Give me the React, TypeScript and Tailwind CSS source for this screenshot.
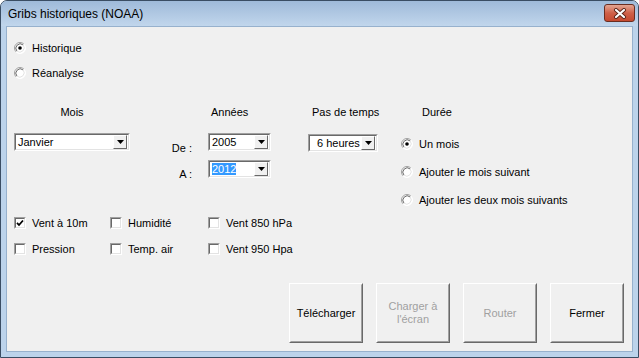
import React from "react";

// Boîte de dialogue "Gribs historiques (NOAA)" — style UserForm Windows 7

const font = "font-['Liberation_Sans',Arial,sans-serif]";

function Radio({ checked, label }: { checked?: boolean; label: string }) {
    return (
        <div className="flex h-[20px] items-center">
            <svg width="12" height="12" viewBox="0 0 12 12" className="shrink-0">
                <circle cx="6" cy="6" r="5.5" fill="#ffffff" />
                <path d="M2.1 9.9 A5.5 5.5 0 0 1 9.9 2.1" stroke="#a0a0a0" fill="none" />
                <path d="M2.9 9.1 A4.4 4.4 0 0 1 9.1 2.9" stroke="#696969" fill="none" />
                <path d="M9.9 2.1 A5.5 5.5 0 0 1 2.1 9.9" stroke="#ffffff" fill="none" />
                <path d="M9.1 2.9 A4.4 4.4 0 0 1 2.9 9.1" stroke="#e3e3e3" fill="none" />
                {checked && <circle cx="6" cy="6" r="1.8" fill="#000000" />}
            </svg>
            <span className="ml-[6px] leading-none">{label}</span>
        </div>
    );
}

function Check({ checked, label, width }: { checked?: boolean; label: string; width: string }) {
    return (
        <div className={`flex h-[20px] items-center ${width}`}>
            <span className="flex h-[12px] w-[12px] shrink-0 border border-t-[#a0a0a0] border-l-[#a0a0a0] border-r-white border-b-white">
                <span className="flex flex-1 items-center justify-center border border-t-[#696969] border-l-[#696969] border-r-[#e3e3e3] border-b-[#e3e3e3] bg-white">
                    {checked && (
                        <svg width="8" height="8" viewBox="0 0 8 8">
                            <polyline points="1,3.8 3,6 7,1.5" fill="none" stroke="#000" strokeWidth="1.8" />
                        </svg>
                    )}
                </span>
            </span>
            <span className="ml-[6px] leading-none">{label}</span>
        </div>
    );
}

function Combo({ value, width, selected, pad = "pl-[2px]" }: { value: string; width: string; selected?: boolean; pad?: string }) {
    return (
        <div className={`flex h-[18px] ${width} border border-t-[#a0a0a0] border-l-[#a0a0a0] border-r-white border-b-white`}>
            <div className="flex flex-1 items-center border border-t-[#696969] border-l-[#696969] border-r-[#e3e3e3] border-b-[#e3e3e3] bg-white">
                <div className={`flex-1 ${pad}`}>
                    <span className={selected ? "bg-[#3399ff] text-white" : ""}>{value}</span>
                </div>
                <div className="mr-[1px] flex h-[14px] w-[14px] items-center justify-center border border-t-white border-l-white border-r-[#696969] border-b-[#696969] bg-[#f0f0f0]">
                    <svg width="7" height="4" viewBox="0 0 7 4">
                        <polygon points="0,0 7,0 3.5,4" fill="#000" />
                    </svg>
                </div>
            </div>
        </div>
    );
}

function Btn({ label, disabled }: { label: React.ReactNode; disabled?: boolean }) {
    return (
        <div className="flex h-[60px] w-[74px] border border-t-white border-l-white border-r-[#696969] border-b-[#696969]">
            <div
                className={`flex flex-1 items-center justify-center border border-t-[#f0f0f0] border-l-[#f0f0f0] border-r-[#a0a0a0] border-b-[#a0a0a0] text-center leading-[13px] ${
                    disabled ? "text-[#a0a0a0]" : "text-black"
                }`}
            >
                {label}
            </div>
        </div>
    );
}

export default function App() {
    return (
        <div className={`h-[358px] w-[639px] bg-white ${font} text-[11px] text-black`}>
            <div className="flex h-full w-full flex-col rounded-t-[7px] border border-[#3a4d63] bg-[#bcd3eb]">
                {/* barre de titre */}
                <div className="flex h-[25px] items-start justify-between rounded-t-[6px] bg-gradient-to-b from-[#9fbad9] to-[#c1d6ec] pl-[7px] pr-[3px]">
                    <span className="mt-[5px] text-[12px] leading-[16px]">Gribs historiques (NOAA)</span>
                    <div className="mt-[3px] flex h-[18px] w-[31px] items-center justify-center rounded-[3px] border border-[#6a2d20] bg-gradient-to-b from-[#e3a592] via-[#cf6048] to-[#c5492f]">
                        <svg width="14" height="11" viewBox="0 0 14 11">
                            <path d="M3 2 L11 9 M11 2 L3 9" stroke="#5a2418" strokeWidth="4" strokeLinecap="round" />
                            <path d="M3 2 L11 9 M11 2 L3 9" stroke="#ffffff" strokeWidth="2.2" strokeLinecap="round" />
                        </svg>
                    </div>
                </div>

                {/* zone cliente */}
                <div className="mx-[5px] mb-[5px] flex flex-1 flex-col border border-[#97b1cd] bg-[#f0f0f0] pl-[7px]">
                    <div className="mt-[11px]">
                        <Radio checked label="Historique" />
                    </div>
                    <div className="mt-[5px]">
                        <Radio label="Réanalyse" />
                    </div>

                    {/* libellés */}
                    <div className="mt-[19px] flex h-[20px] items-center">
                        <span className="w-[116px] text-center">Mois</span>
                        <span className="ml-[81px] w-[101px]">Années</span>
                        <span className="w-[110px]">Pas de temps</span>
                        <span>Durée</span>
                    </div>

                    {/* combos et durée */}
                    <div className="mt-[11px] flex h-[77px]">
                        <Combo value="Janvier" width="w-[116px]" />
                        <div className="flex w-[62px] flex-col items-end">
                            <span className="mt-[8px] h-[14px] leading-[14px]">De :</span>
                            <span className="mt-[12px] h-[14px] leading-[14px]">A :</span>
                        </div>
                        <div className="ml-[16px] flex flex-col">
                            <Combo value="2005" width="w-[63px]" />
                            <div className="mt-[9px]">
                                <Combo value="2012" width="w-[63px]" selected />
                            </div>
                        </div>
                        <div className="ml-[37px] mt-[1px]">
                            <Combo value="6 heures" width="w-[70px]" pad="pl-[7px]" />
                        </div>
                        <div className="ml-[23px] flex flex-col">
                            <div className="mt-[1px]">
                                <Radio checked label="Un mois" />
                            </div>
                            <div className="mt-[8px]">
                                <Radio label="Ajouter le mois suivant" />
                            </div>
                            <div className="mt-[8px]">
                                <Radio label="Ajouter les deux mois suivants" />
                            </div>
                        </div>
                    </div>

                    {/* variables */}
                    <div className="mt-[3px] flex">
                        <Check checked label="Vent à 10m" width="w-[96px]" />
                        <Check label="Humidité" width="w-[98px]" />
                        <Check label="Vent 850 hPa" width="w-[100px]" />
                    </div>
                    <div className="mt-[6px] flex">
                        <Check label="Pression" width="w-[96px]" />
                        <Check label="Temp. air" width="w-[98px]" />
                        <Check label="Vent 950 Hpa" width="w-[100px]" />
                    </div>

                    {/* boutons */}
                    <div className="ml-[275px] mt-[24px] flex gap-[13px]">
                        <Btn label="Télécharger" />
                        <Btn
                            disabled
                            label={
                                <span>
                                    Charger à
                                    <br />
                                    l'écran
                                </span>
                            }
                        />
                        <Btn disabled label="Router" />
                        <Btn label="Fermer" />
                    </div>
                </div>
            </div>
        </div>
    );
}
